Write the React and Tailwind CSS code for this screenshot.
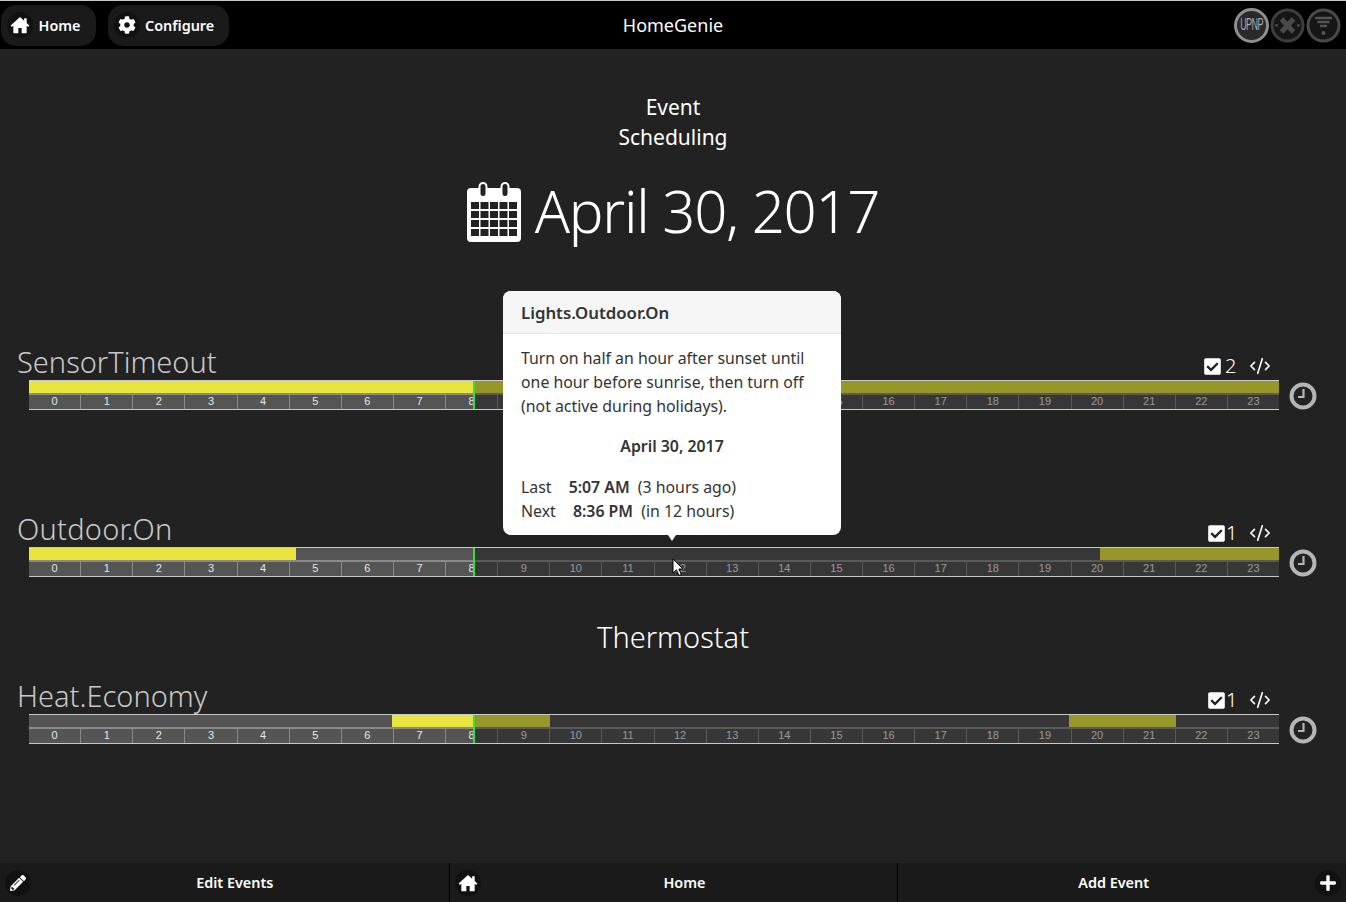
import React from "react";
import { FaCog, FaPencilAlt, FaPlus, FaCheckSquare } from "react-icons/fa";
import { CodeXml } from "lucide-react";

const FONT = "font-['Noto_Sans','Open_Sans',sans-serif]";

function HomeIcon({ className }) {
  return (
    <svg viewBox="0 0 24 24" className={className} fill="currentColor">
      <path d="M12 2.5 0.8 12.6l1.5 1.7L4 12.8V22h6v-6.5h4V22h6v-9.2l1.7 1.5 1.5-1.7L20 9.5V4h-3v2.8z" />
    </svg>
  );
}

function IconDot({ children }) {
  return (
    <span className="flex h-[26px] w-[26px] shrink-0 items-center justify-center rounded-full bg-[#111111] text-white">
      {children}
    </span>
  );
}

function TopButton({ icon, label }) {
  return (
    <div className="flex h-[41px] items-center gap-[5.5px] rounded-[15px] bg-[#1a1a1a] pl-[6px] pr-[15px] text-[14.4px] font-semibold text-white">
      <IconDot>{icon}</IconDot>
      <span className="mt-[1px]">{label}</span>
    </div>
  );
}

function Calendar() {
  const xs = [4, 13.5, 23, 32.5, 42];
  const ys = [20, 29, 38, 47];
  return (
    <svg viewBox="0 0 54 60" className="mt-[2px] h-[60px] w-[54px]" fill="none">
      <path d="M4 6h8v6h8V6h14v6h8V6h8a4 4 0 0 1 4 4v46a4 4 0 0 1-4 4H4a4 4 0 0 1-4-4V10a4 4 0 0 1 4-4z" fill="#fff" />
      <rect x="12.5" y="1" width="7" height="14" rx="3.5" fill="#222" stroke="#fff" strokeWidth="2" />
      <rect x="34.5" y="1" width="7" height="14" rx="3.5" fill="#222" stroke="#fff" strokeWidth="2" />
      {ys.map((y) => xs.map((x) => <rect key={`${x}-${y}`} x={x} y={y} width="8" height="7" fill="#222" />))}
    </svg>
  );
}

function Clock() {
  return (
    <svg viewBox="0 0 28 28" className="ml-[10px] h-[28px] w-[28px] shrink-0" fill="none">
      <circle cx="14" cy="14" r="11.5" stroke="#b5b5b5" strokeWidth="4" fill="#222" />
      <path d="M14.5 7v8H9" stroke="#b5b5b5" strokeWidth="2.2" />
    </svg>
  );
}

const HOURS = Array.from({ length: 24 }, (_, i) => i);

function Timeline({ name, count, segments, countClass, nameClass = "" }) {
  return (
    <div className="flex items-end pl-[17px]">
      <div className="w-[1262px]">
        <div className="flex h-[36px] items-center justify-between">
          <span className={`text-[29px] font-light leading-[36px] text-[#c8c8c8] ${nameClass}`}>{name}</span>
          <div className="mt-[8px] flex items-center text-white">
            <FaCheckSquare className="h-[19px] w-[19px]" />
            <span className={`${countClass} text-[20px] font-light leading-none`}>{count}</span>
            <CodeXml className="ml-[10px] mr-[8px] h-[22px] w-[22px]" strokeWidth={1.75} />
          </div>
        </div>
        <div className="relative ml-[12px] h-[30px] w-[1250px] border-y border-[#c8c8c8]">
          <div className="flex h-[12px]">
            {segments.map(([w, on], i) => (
              <div key={i} className={on ? "bg-[#e8e63e]" : "bg-[#555555]"} style={{ width: w }} />
            ))}
          </div>
          <div className="flex h-[16px] border-t-2 border-[#8a8a8a] bg-[#555555]">
            {HOURS.map((h) => (
              <div
                key={h}
                className="flex-1 border-r border-[#8a8a8a] text-center font-['Liberation_Sans',sans-serif] text-[11px] leading-[12px] text-[#e6e6e6] last:border-r-0"
              >
                {h}
              </div>
            ))}
          </div>
          <div className="absolute inset-y-0 left-[445px] right-0 bg-black/35" />
          <div className="absolute inset-y-0 left-[444px] w-[2px] bg-[#3ddc3d]" />
        </div>
      </div>
      <Clock />
    </div>
  );
}

function FooterCell({ left, right, label, divider, className }) {
  return (
    <div className={`flex items-center ${className} ${divider ? "border-l border-black" : ""}`}>
      {left && <span className="w-[26px] shrink-0">{left}</span>}
      <span className="flex-1 text-center text-[14.4px] font-semibold text-white">{label}</span>
      {right && <span className="w-[26px] shrink-0">{right}</span>}
    </div>
  );
}

function StatusIcons() {
  return (
    <div className="flex items-center gap-[1px] pr-[5px]">
      <div className="flex h-[35px] w-[35px] items-center justify-center rounded-full border-[3px] border-[#8f8f8f] bg-[#2a2a2a] font-['Liberation_Sans',sans-serif] text-[9px] leading-none tracking-[-0.6px] text-[#a8a8a8]">
        <span className="scale-y-[1.9]">UPNP</span>
      </div>
      <svg viewBox="0 0 35 35" className="h-[35px] w-[35px]" fill="none">
        <circle cx="17.5" cy="17.5" r="15.5" stroke="#3d3d3d" strokeWidth="3" fill="#161616" />
        <path d="M11.5 11l12 13M23.5 11l-12 13" stroke="#4a4a4a" strokeWidth="5" />
        <circle cx="6.5" cy="17.5" r="1.4" fill="#4a4a4a" />
        <circle cx="28.5" cy="17.5" r="1.4" fill="#4a4a4a" />
      </svg>
      <svg viewBox="0 0 35 35" className="h-[35px] w-[35px]" fill="none">
        <circle cx="17.5" cy="17.5" r="15.5" stroke="#4a4a4a" strokeWidth="3" fill="#161616" />
        <path d="M9 10h17M11.5 14h12M14 18h7" stroke="#555555" strokeWidth="2.4" />
        <circle cx="17.5" cy="25" r="2" fill="#555555" />
      </svg>
    </div>
  );
}

export default function App() {
  return (
    <div className={`relative flex h-[902px] w-[1346px] flex-col overflow-hidden bg-[#222222] ${FONT}`}>
      <header className="relative flex h-[49px] shrink-0 items-center justify-between border-t border-[#c8c8c8] bg-black pl-[1px]">
        <div className="flex gap-[12px]">
          <TopButton icon={<HomeIcon className="h-[20px] w-[20px]" />} label="Home" />
          <TopButton icon={<FaCog className="h-[18px] w-[18px]" />} label="Configure" />
        </div>
        <div className="absolute inset-x-0 text-center text-[18px] text-white">HomeGenie</div>
        <StatusIcons />
      </header>

      <main className="flex-1 pt-[43px]">
        <div className="text-center text-[21px] leading-[30px] text-white">
          Event
          <br />
          Scheduling
        </div>
        <div className="mt-[19px] flex h-[80px] items-center justify-center gap-[14px] text-white">
          <Calendar />
          <span className="text-[58px] font-light leading-[80px] tracking-[-1.25px]">April 30, 2017</span>
        </div>

        <div className="mt-[93px]">
          <Timeline name="SensorTimeout" count="2" countClass="ml-[3px] w-[14px]" segments={[["100%", true]]} />
        </div>
        <div className="mt-[101px]">
          <Timeline
            name="Outdoor.On"
            nameClass="tracking-[0.25px]"
            count="1"
            countClass="w-[13px]"
            segments={[["267px", true], ["804px", false], ["179px", true]]}
          />
        </div>
        <div className="mt-[40px] text-center text-[29px] font-light leading-[40px] text-white">Thermostat</div>
        <div className="mt-[21px]">
          <Timeline
            name="Heat.Economy"
            count="1"
            countClass="w-[13px]"
            segments={[["363px", false], ["158px", true], ["519px", false], ["107px", true], ["103px", false]]}
          />
        </div>
      </main>

      <footer className="grid h-[39px] shrink-0 grid-cols-3 bg-[#1a1a1a]">
        <FooterCell className="pl-[5px] pr-[10px]" left={<IconDot><FaPencilAlt className="h-[16px] w-[16px]" /></IconDot>} label="Edit Events" />
        <FooterCell className="pl-[5px] pr-[9px]" divider left={<IconDot><HomeIcon className="h-[20px] w-[20px]" /></IconDot>} label="Home" />
        <FooterCell className="pl-[14px] pr-[5px]" divider right={<IconDot><FaPlus className="h-[18px] w-[18px]" /></IconDot>} label="Add Event" />
      </footer>

      <div className="absolute left-[503px] top-[291px] w-[338px] rounded-[8px] bg-white text-[15.85px] text-[#333333]">
        <div className="h-[43px] rounded-t-[8px] border-b border-[#e8e8e8] bg-[#f6f6f6] px-[18px] text-[16.8px] font-semibold leading-[44px]">
          Lights.Outdoor.On
        </div>
        <div className="px-[18px] pb-[12px] pt-[12px] leading-[24px]">
          <div>
            Turn on half an hour after sunset until one hour before sunrise, then turn off (not active during holidays).
          </div>
          <div className="mt-[16px] text-center font-semibold">April 30, 2017</div>
          <div className="mt-[17px]">
            Last <span className="ml-[13px] font-semibold">5:07 AM</span> <span className="ml-[4px]">(3 hours ago)</span>
          </div>
          <div>
            Next <span className="ml-[13px] font-semibold">8:36 PM</span> <span className="ml-[4px]">(in 12 hours)</span>
          </div>
        </div>
        <div className="absolute -bottom-[6px] left-[165px] h-0 w-0 border-x-[4px] border-t-[6px] border-x-transparent border-t-white" />
      </div>

      <svg viewBox="0 0 12 19" className="absolute left-[672px] top-[558px] h-[19px] w-[12px]">
        <path d="M1 1v14l3.5-3.2L7 17.5l2.4-1-2.5-5.5H11z" fill="#fff" stroke="#000" strokeWidth="1" />
      </svg>
    </div>
  );
}
